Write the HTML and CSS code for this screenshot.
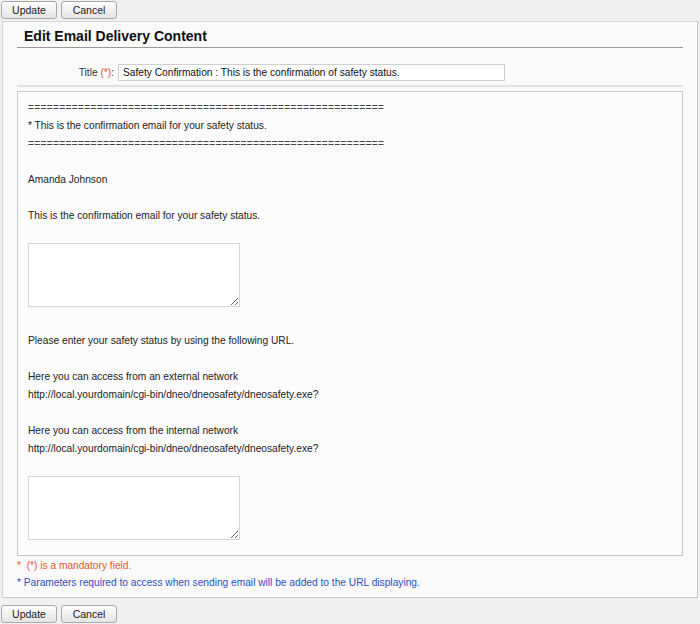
FILE: index.html
```html
<!DOCTYPE html>
<html lang="en">
<head>
  <meta charset="UTF-8">
  <title>Edit Email Delivery Content</title>
  <link rel="stylesheet" href="styles.css">
</head>
<body>
  <div class="toolbar">
    <button type="button" class="btn">Update</button>
    <button type="button" class="btn">Cancel</button>
  </div>
  <div class="panel">
    <h2>Edit Email Delivery Content</h2>
    <div class="title-row">
      <label for="title" class="title-label">Title <span class="req">(*)</span>:</label>
      <input type="text" id="title" class="title-input" value="Safety Confirmation : This is the confirmation of safety status.">
    </div>
    <div class="sep"></div>
    <div class="mail-body">
      <div class="line rule">=========================================================</div>
      <div class="line">* This is the confirmation email for your safety status.</div>
      <div class="line rule">=========================================================</div>
      <div class="gap"></div>
      <div class="line">Amanda Johnson</div>
      <div class="gap"></div>
      <div class="line">This is the confirmation email for your safety status.</div>
      <textarea class="param first"></textarea>
      <div class="line">Please enter your safety status by using the following URL.</div>
      <div class="gap"></div>
      <div class="line">Here you can access from an external network</div>
      <div class="line">http://local.yourdomain/cgi-bin/dneo/dneosafety/dneosafety.exe?</div>
      <div class="gap"></div>
      <div class="line">Here you can access from the internal network</div>
      <div class="line">http://local.yourdomain/cgi-bin/dneo/dneosafety/dneosafety.exe?</div>
      <textarea class="param last"></textarea>
    </div>
    <p class="note note-req">* &nbsp;(*) is a mandatory field.</p>
    <p class="note note-info">* Parameters required to access when sending email will be added to the URL displaying.</p>
  </div>
  <div class="toolbar bottom">
    <button type="button" class="btn">Update</button>
    <button type="button" class="btn">Cancel</button>
  </div>
</body>
</html>
```

FILE: styles.css
```css
body {
  margin: 0;
  background: #f0f0f0;
  font-family: 'Liberation Sans', Arial, sans-serif;
  font-size: 10.2px;
  color: #222;
}
.toolbar {
  display: flex;
  gap: 4px;
  padding: 1px 1px 2px;
}
.toolbar.bottom {
  padding-top: 7px;
}
.btn {
  width: 56px;
  height: 18px;
  padding: 0;
  border: 1px solid #a9a9a9;
  border-radius: 3px;
  background: linear-gradient(#fdfdfd, #e4e4e4);
  font-family: 'Liberation Sans', Arial, sans-serif;
  font-size: 10.5px;
  color: #222;
}
.panel {
  margin: 0 2px;
  padding: 0 14px 6px;
  background: #fafafa;
  border: 1px solid #d4d4d4;
  border-right-color: #c8c8c8;
  border-bottom-color: #c8c8c8;
}
h2 {
  margin: 0;
  padding: 5px 0 2px 7px;
  line-height: 18px;
  font-size: 14px;
  font-weight: bold;
  color: #111;
  border-bottom: 1px solid #999;
}
.title-row {
  display: flex;
  align-items: center;
  margin-top: 16px;
}
.title-label {
  width: 97px;
  text-align: right;
  margin-right: 4px;
  color: #333;
}
.req {
  color: #e8562a;
}
.title-input {
  width: 387px;
  height: 17px;
  box-sizing: border-box;
  padding: 0 4px;
  border: 1px solid #cfcfcf;
  background: #fff;
  font-family: 'Liberation Sans', Arial, sans-serif;
  font-size: 10.2px;
  color: #111;
}
.sep {
  height: 2px;
  margin-top: 4px;
  background: #e2e2e2;
}
.mail-body {
  margin-top: 4px;
  padding: 7px 10px 15px;
  border: 1px solid #c9c9c9;
  background: #fcfcfc;
}
.line {
  line-height: 18px;
  white-space: nowrap;
}
.rule {
  letter-spacing: 0.3px;
  color: #444;
}
.gap {
  height: 18px;
}
.param {
  display: block;
  width: 212px;
  height: 64px;
  box-sizing: border-box;
  border: 1px solid #d6d6d6;
  background: #fff;
  resize: both;
}
.param.first {
  margin: 18px 0 25px;
}
.param.last {
  margin: 18px 0 0;
}
.note {
  margin: 0;
  line-height: 18px;
}
.note-req {
  padding-top: 1px;
  line-height: 17px;
  color: #e8562a;
}
.note-info {
  line-height: 17px;
  color: #2a4fc4;
}
```
